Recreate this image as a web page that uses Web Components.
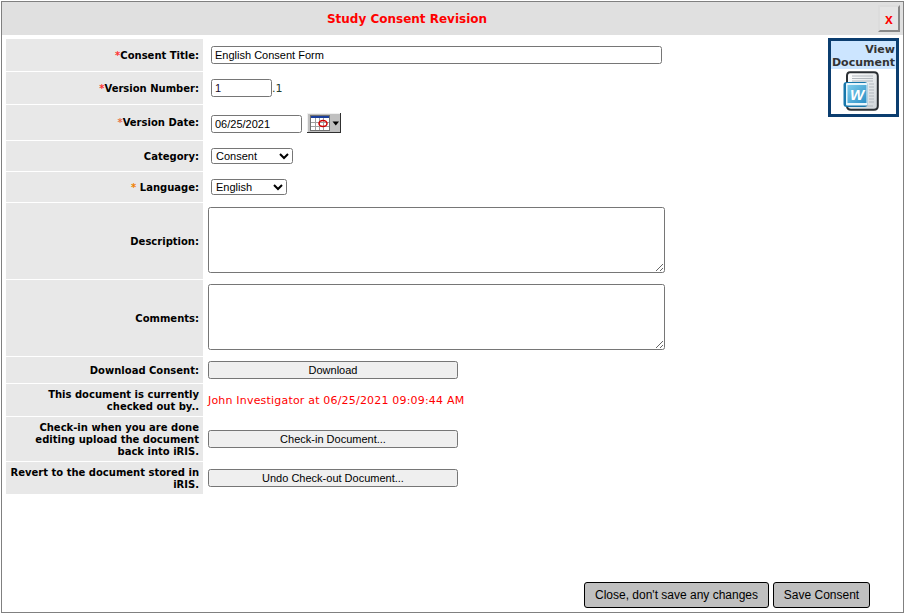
<!DOCTYPE html>
<html><head><meta charset="utf-8"><title>Study Consent Revision</title>
<style>html,body{margin:0;padding:0;background:#fff}</style></head>
<body>
<consent-dialog heading="Study Consent Revision">
  <view-document slot="aside"></view-document>
  <form-row h="32" top="7" required="*">Consent Title:<text-field slot="field" value="English Consent Form" w="451"></text-field></form-row>
  <form-row h="32" top="7" required="*">Version Number:<span slot="field" style="display:flex;align-items:center;font:11px 'DejaVu Sans',sans-serif;color:#1f4030"><text-field value="1" w="61" color="#1a0a2a"></text-field><span>.1</span></span></form-row>
  <form-row h="35" top="10" required="*" reqcolor="#e8704a">Version Date:<span slot="field" style="display:flex;align-items:flex-start"><text-field value="06/25/2021" w="91"></text-field><calendar-button></calendar-button></span></form-row>
  <form-row h="30" top="7">Category:<select-field slot="field" w="82" value="Consent"></select-field></form-row>
  <form-row h="30" top="7" required="* " reqcolor="#f08000">Language:<select-field slot="field" w="76" value="English"></select-field></form-row>
  <form-row h="76" top="4" inset="3">Description:<area-field slot="field"></area-field></form-row>
  <form-row h="76" top="4" inset="3">Comments:<area-field slot="field"></area-field></form-row>
  <form-row h="26" top="4" inset="3">Download Consent:<wide-button slot="field">Download</wide-button></form-row>
  <form-row h="32" top="10" inset="3">This document is currently checked out by..<span slot="field" style="font:11px 'DejaVu Sans',sans-serif;color:#f00;white-space:nowrap;letter-spacing:.19px">John Investigator at 06/25/2021 09:09:44 AM</span></form-row>
  <form-row h="44" top="13" inset="3">Check-in when you are done editing upload the document back into iRIS.<wide-button slot="field">Check-in Document...</wide-button></form-row>
  <form-row h="32" top="7" inset="3">Revert to the document stored in iRIS.<wide-button slot="field">Undo Check-out Document...</wide-button></form-row>
  <action-button slot="footer" w="185">Close, don't save any changes</action-button>
  <action-button slot="footer" w="97">Save Consent</action-button>
</consent-dialog>
<script>
function def(name, css, html){
  customElements.define(name, class extends HTMLElement{
    connectedCallback(){
      if(this.shadowRoot) return;
      const r=this.attachShadow({mode:'open'});
      r.innerHTML='<style>'+css+'</style>'+(typeof html==='function'?html(this):html);
    }
  });
}
const esc=s=>String(s==null?'':s).replace(/&/g,'&amp;').replace(/"/g,'&quot;').replace(/</g,'&lt;');
def('consent-dialog',`
:host{display:flex;flex-direction:column;box-sizing:border-box;width:903px;height:612px;margin:1px;border:1px solid #808080;background:#fff}
.bar{flex:none;height:33px;background:#e0e0e0;display:flex;align-items:center}
h1{flex:1;margin:0;text-align:center;font:bold 12px 'DejaVu Sans',sans-serif;color:#f00;padding-right:66px}
.x{flex:none;box-sizing:border-box;width:22px;height:27px;margin:0 3px 0 0;background:#e4e4e4;border:2px outset #dcdcdc;color:#f00;font:bold 14px 'Liberation Sans',sans-serif;display:flex;align-items:center;justify-content:center;padding:0}
.main{flex:1;display:flex;min-height:0;padding:4px 4px 0 4px}
.rows{display:flex;flex-direction:column;flex:1;min-width:0}
.foot{flex:none;display:flex;justify-content:flex-end;gap:4px;padding:0 33px 4px 0}
`,t=>`<div class="bar"><h1>${esc(t.getAttribute('heading'))}</h1><button class="x">x</button></div>
<div class="main"><div class="rows"><slot></slot></div><slot name="aside"></slot></div>
<div class="foot"><slot name="footer"></slot></div>`);
def('form-row',`
:host{display:grid;grid-template-columns:197px 1fr;column-gap:2px;box-sizing:border-box;margin-bottom:1px;font:bold 10px/12px 'DejaVu Sans',sans-serif;color:#000}
.l{background:#e8e8e8;display:flex;align-items:center;justify-content:flex-end;text-align:right;padding:1px 4px 0;box-sizing:border-box;line-height:12px}
.r{color:#f33}
.f{display:block;min-width:0}
`,t=>{
  const req=t.getAttribute('required');const c=t.getAttribute('reqcolor');
  t.style.height=t.getAttribute('h')+'px';
  return `<div class="l"><span>${req?`<span class="r" style="${c?'color:'+c:''}">${req.replace(' ','&nbsp;')}</span>`:''}<slot></slot></span></div>
  <div class="f" style="padding:${t.getAttribute('top')}px 0 0 ${t.hasAttribute('inset')?3:6}px"><slot name="field"></slot></div>`;});
def('text-field',`
:host{display:inline-block;line-height:0}
input{box-sizing:border-box;height:18px;margin:0;padding:1px 3px;border:1px solid #767676;border-radius:2.5px;background:#fff;font:11px 'Liberation Sans',sans-serif;outline:none}
`,t=>`<input type="text" value="${esc(t.getAttribute('value'))}" style="width:${t.getAttribute('w')}px;color:${t.getAttribute('color')||'#000'}">`);
def('select-field',`
:host{display:block;line-height:0}
select{box-sizing:border-box;height:16px;margin:0;padding:0;border:1px solid #767676;border-radius:2.5px;background:#fff;font:11px 'Liberation Sans',sans-serif;color:#000}
`,t=>`<select style="width:${t.getAttribute('w')}px"><option>${esc(t.getAttribute('value'))}</option></select>`);
def('area-field',`
:host{display:block;line-height:0}
textarea{box-sizing:border-box;display:block;width:457px;height:66px;margin:0;padding:2px;border:1px solid #767676;border-radius:2.5px;background:#fff;outline:none}
`,`<textarea></textarea>`);
def('wide-button',`
:host{display:block;line-height:0}
button{box-sizing:border-box;width:250px;height:18px;margin:0;padding:0;border:1px solid #767676;border-radius:2.5px;background:#efefef;font:11px 'Liberation Sans',sans-serif;color:#000}
`,`<button><slot></slot></button>`);
def('action-button',`
:host{display:block;line-height:0}
button{box-sizing:border-box;height:26px;margin:0;padding:0;border:1px solid #000;border-radius:3px;background:#c0c0c0;font:12px 'Liberation Sans',sans-serif;color:#000}
`,t=>`<button style="width:${t.getAttribute('w')}px"><slot></slot></button>`);
def('calendar-button',`
:host{display:block;margin:-2px 0 0 5px;line-height:0}
svg{display:block}
`,`<svg width="34" height="20" viewBox="0 0 34 20" shape-rendering="crispEdges" aria-label="Calendar">
<rect width="34" height="20" fill="#c0c0c0"/>
<path d="M0 0H34V1H1V20H0Z" fill="#f0f0f0"/>
<path d="M33 0H34V20H0V19H33Z" fill="#303030"/>
<rect x="3" y="2" width="20" height="16" fill="#707070"/>
<rect x="4" y="3" width="18" height="14" fill="#fff"/>
<rect x="4" y="3" width="18" height="2" fill="#1a3f9c"/>
<path d="M4 9H22M4 13H22M8.500 5V17M12.500 5V17M16.500 5V17" stroke="#a0a0a0" stroke-width="1"/>
<ellipse cx="16" cy="10.500" rx="4" ry="3" fill="none" stroke="#d00000" stroke-width="1.500" shape-rendering="auto"/>
<path d="M25.500 8.500H32L28.750 12.500Z" fill="#000" shape-rendering="auto"/>
</svg>`);
def('view-document',`
:host{display:block;flex:none;box-sizing:border-box;width:71px;height:79px;margin:-1px 0 0 0;border:3px solid #0b3d6f;background:#fff}
.h{background:#cce5ff;font:bold 11px/13px 'DejaVu Sans',sans-serif;color:#333;text-align:right;padding:2px 1px 0 0;height:28px;box-sizing:border-box}
svg{display:block;margin:2px 0 0 12px}
`,`<div class="h">View<br>Document</div>
<svg width="36" height="41" viewBox="0 0 36 41" aria-label="Word document">
<defs><linearGradient id="w" x1="0" y1="0" x2="1" y2="1"><stop offset="0" stop-color="#7fcdec"/><stop offset="1" stop-color="#2b8fc6"/></linearGradient>
<linearGradient id="p" x1="0" y1="0" x2="1" y2="1"><stop offset="0" stop-color="#fff"/><stop offset="1" stop-color="#cfd4d8"/></linearGradient></defs>
<path d="M7 1.200H31Q34.800 1.200 34.800 5V35Q34.800 38.800 31 38.800H8Q4 38.800 4 35V5Q4 1.200 7 1.200Z" fill="url(#p)" stroke="#2b2f33" stroke-width="2"/>
<path d="M9 5H30M9 7.500H30M9 10H30M26 13H31M26 16H31M26 19H31M26 22H31M26 25H31M26 28H31M26 31H31M9 35H30" stroke="#b2b8bd" stroke-width="1.200"/>
<rect x=".5" y="11" width="24" height="25" rx="3" fill="#1877ab"/>
<rect x="3" y="12" width="21.500" height="22.500" rx="1" fill="#e8f6fc"/>
<rect x="4.500" y="14" width="19" height="18" fill="url(#w)"/>
<text x="14" y="29" text-anchor="middle" font-family="'Liberation Sans',sans-serif" font-size="15" font-weight="bold" font-style="italic" fill="#fff">W</text>
</svg>`);
</script>
</body></html>
